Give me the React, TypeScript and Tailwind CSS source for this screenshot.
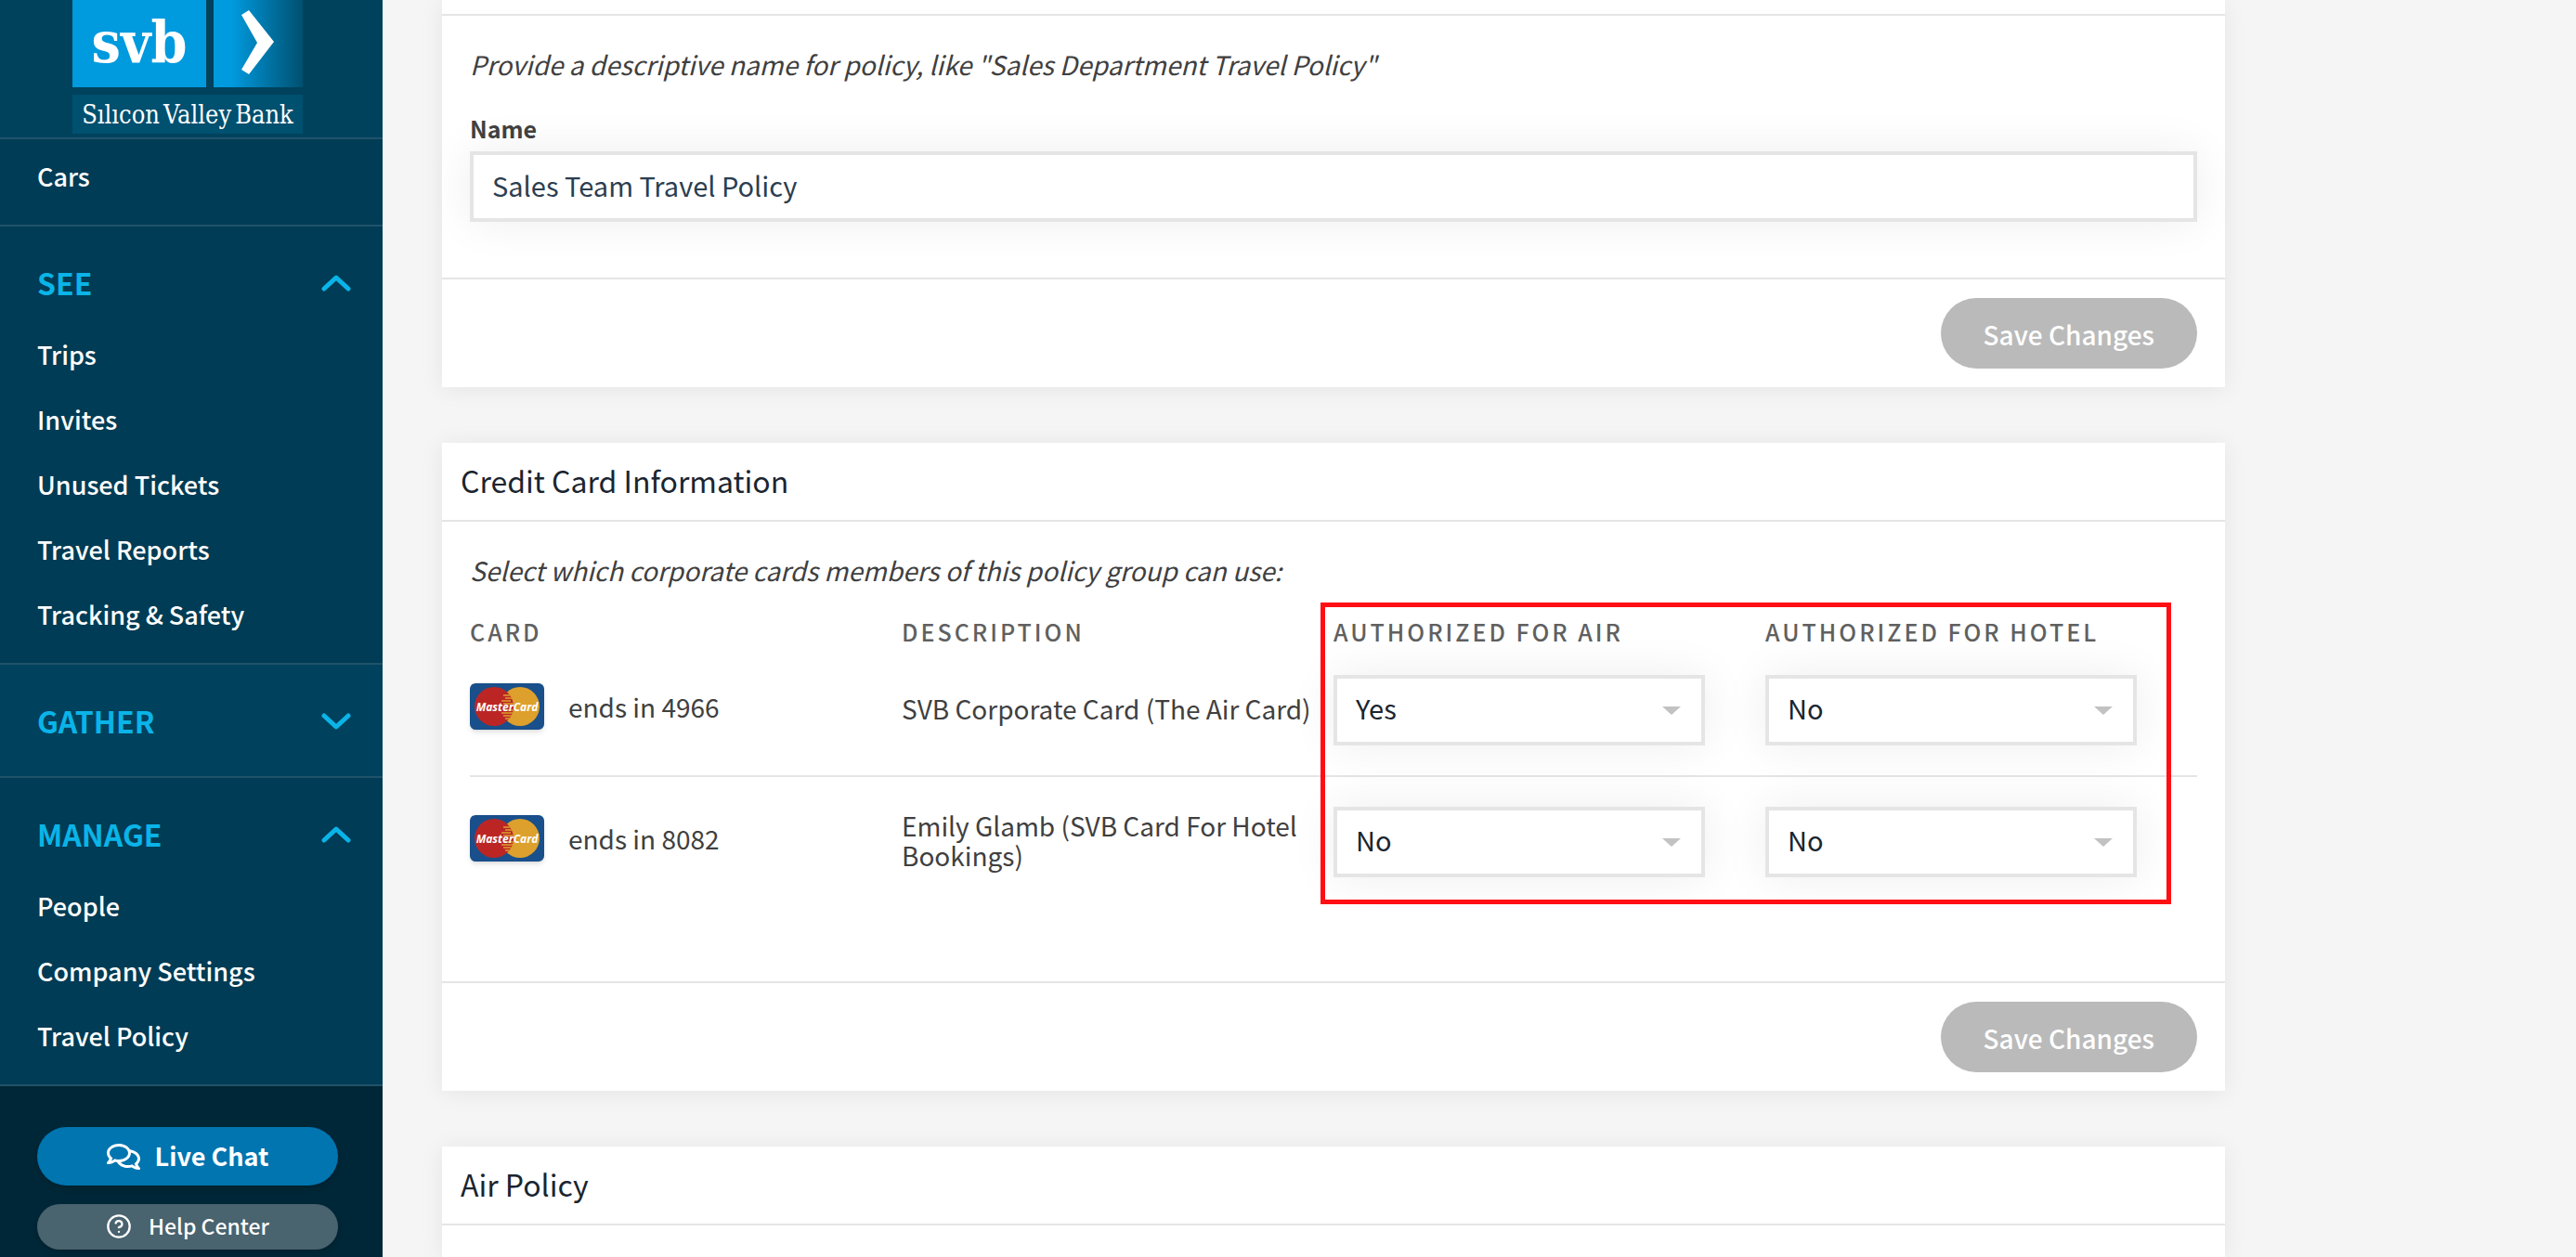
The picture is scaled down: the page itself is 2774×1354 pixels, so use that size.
import { useState } from "react"
import type { ReactNode } from "react"
import { FaRegComments } from "react-icons/fa"
import { FiHelpCircle } from "react-icons/fi"

const sections = [
  {
    title: "SEE",
    open: true,
    items: ["Trips", "Invites", "Unused Tickets", "Travel Reports", "Tracking & Safety"],
  },
  { title: "GATHER", open: false, items: ["Meetings"] },
  { title: "MANAGE", open: true, items: ["People", "Company Settings", "Travel Policy"] },
]

const creditCards = [
  { last4: "4966", description: "SVB Corporate Card (The Air Card)", air: "Yes", hotel: "No" },
  { last4: "8082", description: "Emily Glamb (SVB Card For Hotel Bookings)", air: "No", hotel: "No" },
]

function Logo() {
  return (
    <a href="#" className="ml-[78px] flex w-[248px] flex-col gap-2 pb-1 text-white">
      <span className="flex gap-2">
        <span className="flex h-[94px] w-36 items-center justify-center bg-[#009ade] pb-0.5 font-['DejaVu_Serif_Condensed','DejaVu_Serif',serif] text-[62px] leading-none font-bold">
          svb
        </span>
        <svg className="h-[94px] w-24" viewBox="0 0 96 94" aria-hidden="true">
          <defs>
            <linearGradient id="fade" x1="0" x2="1" y1="0" y2="0">
              <stop offset="0.2" stopColor="#009ade" />
              <stop offset="1" stopColor="#005070" />
            </linearGradient>
          </defs>
          <rect width="96" height="94" fill="url(#fade)" />
          <path d="M30 16 L38 11 L65 45 L38 80 L30 75 L47 46 Z" fill="#fff" />
        </svg>
      </span>
      <span className="flex h-[42px] items-center justify-center gap-1 bg-[#005070] font-['DejaVu_Serif_Condensed','DejaVu_Serif',serif] text-[27px] leading-none">
        <span>Sılıcon</span>
        <span>Valley</span>
        <span>Bank</span>
      </span>
    </a>
  )
}

function Chevron({ up }: { up: boolean }) {
  return (
    <svg className="h-5 w-8" viewBox="0 0 32 20" fill="none" aria-hidden="true">
      <path
        d={up ? "M3 16 L16 4 L29 16" : "M3 4 L16 16 L29 4"}
        stroke="#0ab4e8"
        strokeWidth="5"
        strokeLinecap="round"
        strokeLinejoin="round"
      />
    </svg>
  )
}

function NavItem({ label }: { label: string }) {
  return (
    <li>
      <a href="#" className="flex h-[70px] items-center pb-0.5 text-[27px] font-medium text-white">
        {label}
      </a>
    </li>
  )
}

function NavSection({ section }: { section: (typeof sections)[number] }) {
  const [open, setOpen] = useState(section.open)

  return (
    <div className={`border-b-2 border-[#20536a] pt-8 pl-10 ${open ? "bg-[#003c55]" : "bg-[#00425d] pb-[30px]"}`}>
      <button
        type="button"
        aria-expanded={open}
        className="flex h-[58px] w-full items-center justify-between pr-[34px] text-[32px] leading-none font-bold text-[#0ab4e8]"
        onClick={() => setOpen(!open)}
      >
        <span className="pb-0.5">{section.title}</span>
        <Chevron up={open} />
      </button>
      {open && (
        <ul className="pt-[14px] pb-4">
          {section.items.map((item) => (
            <NavItem key={item} label={item} />
          ))}
        </ul>
      )}
    </div>
  )
}

function Sidebar() {
  return (
    <aside className="flex w-[412px] shrink-0 flex-col bg-[#002737]">
      <div className="border-b-2 border-[#20536a] bg-[#00425c]">
        <Logo />
      </div>
      <nav>
        <ul className="border-b-2 border-[#20536a] bg-[#003c55] pt-1.5 pb-4 pl-10">
          <NavItem label="Cars" />
        </ul>
        {sections.map((section) => (
          <NavSection key={section.title} section={section} />
        ))}
      </nav>
      <div className="flex flex-col gap-5 pt-11 pr-12 pb-2 pl-10 text-white">
        <button type="button" className="flex h-[63px] items-center justify-center gap-4 rounded-full bg-[#0075b0] text-[27px] font-bold shadow-md">
          <FaRegComments className="h-9 w-9" />
          Live Chat
        </button>
        <button type="button" className="flex h-[49px] items-center justify-center gap-[18px] rounded-full bg-[#49636f] pb-0.5 text-[23px] font-medium shadow-md">
          <FiHelpCircle className="h-7 w-7" />
          Help Center
        </button>
      </div>
    </aside>
  )
}

function MasterCard() {
  return (
    <svg className="h-[50px] w-20 rounded-md shadow-md" viewBox="0 0 80 50" role="img" aria-label="MasterCard">
      <defs>
        <clipPath id="left-disc">
          <circle cx="26" cy="25" r="21" />
        </clipPath>
      </defs>
      <rect width="80" height="50" fill="#194f8b" />
      <circle cx="54" cy="25" r="21" fill="#dda02c" />
      <circle cx="26" cy="25" r="21" fill="#bb2625" />
      <g clipPath="url(#left-disc)">
        <path d="M41 10h7M36 13h9M38 16h11M34 19h10M36 22h12M36 29h12M34 32h12M36 35h12M38 38h8M40 41h4" stroke="#dda02c" strokeWidth="1.4" />
      </g>
      <text
        x="40"
        y="30"
        textAnchor="middle"
        fill="#fff"
        className="font-['Open_Sans',sans-serif] text-[12px] font-bold italic"
      >
        MasterCard
      </text>
    </svg>
  )
}

function Panel({ title, className = "", children }: { title?: string; className?: string; children?: ReactNode }) {
  return (
    <section className={`bg-white shadow-[0_2px_24px_rgba(0,0,0,0.07)] ${className}`}>
      <header className="border-b-2 border-[#e5e5e5] px-5">
        {title ? (
          <h2 className="flex h-[83px] items-center pb-1 text-[32px] text-[#1a2530]">{title}</h2>
        ) : (
          <div className="h-[15px]" />
        )}
      </header>
      {children}
    </section>
  )
}

function PanelFooter() {
  return (
    <footer className="flex justify-end border-t-2 border-[#e5e5e5] px-[30px] py-5">
      <button type="button" className="h-[76px] rounded-full bg-[#bababa] px-[46px] pt-0.5 text-[28px] font-medium text-white">
        Save Changes
      </button>
    </footer>
  )
}

function YesNoSelect({ label, value }: { label: string; value: string }) {
  return (
    <div className="relative w-[400px] max-w-full">
      <select
        aria-label={label}
        defaultValue={value}
        className="block h-[76px] w-full appearance-none rounded-none border-4 border-[#e5e5e5] bg-white px-5 pb-1 text-[29px] text-[#1a2530] shadow-[0_0_50px_rgba(0,0,0,0.07)]"
      >
        <option>Yes</option>
        <option>No</option>
      </select>
      <svg className="pointer-events-none absolute top-[34px] right-[26px] h-[9px] w-5" viewBox="0 0 20 9" aria-hidden="true">
        <path d="M0 0H20L10 9Z" fill="#c2c2c2" />
      </svg>
    </div>
  )
}

function CreditCardTable() {
  return (
    <div className="relative">
      <table className="w-full table-fixed text-left">
        <thead>
          <tr className="h-[61px] align-bottom text-[25px] leading-[30px] tracking-[3px] text-[#606060]">
            <th className="font-medium">CARD</th>
            <th className="font-medium">DESCRIPTION</th>
            <th className="font-medium">AUTHORIZED FOR AIR</th>
            <th className="font-medium">AUTHORIZED FOR HOTEL</th>
          </tr>
        </thead>
        <tbody>
          {creditCards.map((card) => (
            <tr key={card.last4} className="border-b-2 border-[#e5e5e5] last:border-b-0">
              <td className="pb-2">
                <div className="flex items-center gap-[26px]">
                  <MasterCard />
                  ends in {card.last4}
                </div>
              </td>
              <td className="pb-1 leading-8">{card.description}</td>
              <td className="py-8">
                <YesNoSelect label={`Authorized for air, card ${card.last4}`} value={card.air} />
              </td>
              <td className="py-8">
                <YesNoSelect label={`Authorized for hotel, card ${card.last4}`} value={card.hotel} />
              </td>
            </tr>
          ))}
        </tbody>
      </table>
      {/* Callout around the authorization columns */}
      <div className="pointer-events-none absolute top-[15px] right-7 bottom-[3px] left-[calc(50%-14px)] border-5 border-[#ff0f14]" />
    </div>
  )
}

export default function App() {
  return (
    <div className="flex min-h-screen bg-[#f5f5f5] font-['Noto_Sans_CJK_SC',sans-serif] text-[28px] text-[#404040]">
      <Sidebar />

      <main className="flex min-w-0 grow flex-col gap-[60px] px-16">
        <Panel className="w-full max-w-[1920px]">
          <div className="px-[30px] pt-8 pb-[60px]">
            <p className="leading-10 italic">Provide a descriptive name for policy, like "Sales Department Travel Policy"</p>
            <label htmlFor="policy-name" className="mt-8 block text-[25px] leading-[34px] font-bold">
              Name
            </label>
            <input
              id="policy-name"
              type="text"
              defaultValue="Sales Team Travel Policy"
              className="mt-2 block h-[76px] w-full border-4 border-[#e5e5e5] bg-white px-5 pb-1 text-[29px] text-[#2c3e50] shadow-[0_0_50px_rgba(0,0,0,0.07)]"
            />
          </div>
          <PanelFooter />
        </Panel>

        <Panel title="Credit Card Information" className="w-full max-w-[1920px]">
          <div className="px-[30px] pt-8 pb-20">
            <p className="leading-10 italic">Select which corporate cards members of this policy group can use:</p>
            <CreditCardTable />
          </div>
          <PanelFooter />
        </Panel>

        <Panel title="Air Policy" className="w-full max-w-[1920px] grow" />
      </main>
    </div>
  )
}
